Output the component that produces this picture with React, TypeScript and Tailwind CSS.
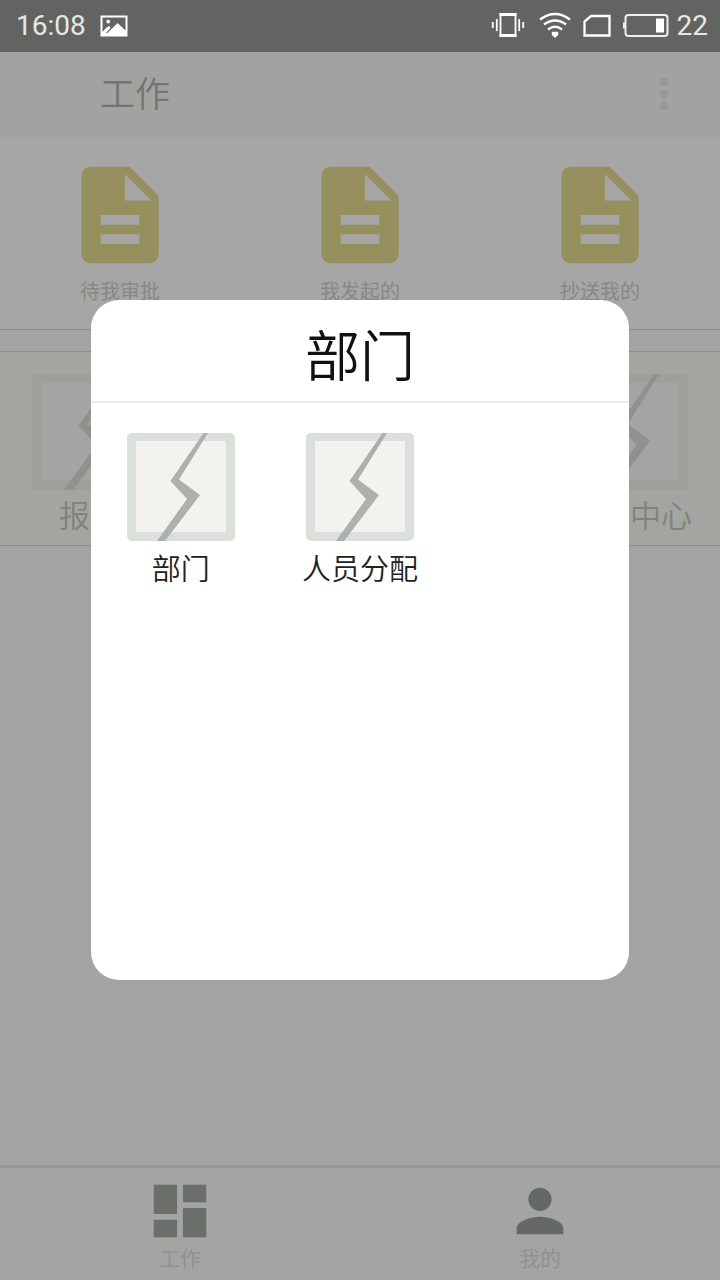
import React from "react";

const shortcuts = ["待我审批", "我发起的", "抄送我的"];
const modules = ["报表", "部门", "审批", "个人中心"];
const departmentItems = ["部门", "人员分配"];

function VibrateIcon() {
  return (
    <svg viewBox="0 0 34 28" className="h-7 w-[34px]" fill="none" stroke="#fff" aria-hidden="true">
      <rect x="9.500" y="2" width="15" height="22" strokeWidth="1.800" />
      <path d="M8.500 2.500h17M8.500 23.500h17" strokeWidth="3" />
      <path d="M5.800 7v12M28.200 7v12M1.800 10v6M32.200 10v6" strokeWidth="1.800" />
    </svg>
  );
}

function WifiIcon() {
  return (
    <svg viewBox="0 0 32 28" className="h-7 w-8" fill="none" stroke="#fff" strokeWidth="2.300" aria-hidden="true">
      <path d="M1 7.500Q16 -3.500 31 7.500M5 12.500Q16 4.500 27 12.500M9 17.500Q16 12 23 17.500" />
      <path d="M13.500 20.500h5v2L16 25l-2.500-2.500z" fill="#fff" strokeWidth="1.500" strokeLinejoin="round" />
    </svg>
  );
}

function SimIcon() {
  return (
    <svg viewBox="0 0 28 28" className="size-7" fill="none" stroke="#fff" strokeWidth="2.300" aria-hidden="true">
      <path d="M8 4H26.500v19.500H1.500V9.500z" />
    </svg>
  );
}

function BatteryIcon() {
  return (
    <svg viewBox="0 0 46 28" className="h-7 w-[46px]" fill="none" stroke="#eee" aria-hidden="true">
      <rect x="2.500" y="3" width="42" height="21" rx="3" strokeWidth="2" />
      <path d="M1 10.500v6" strokeWidth="2" />
      <rect x="33" y="6.500" width="8" height="14" fill="#fff" stroke="none" />
    </svg>
  );
}

function PictureIcon() {
  return (
    <svg viewBox="0 0 28 22" className="h-[22px] w-7" aria-hidden="true">
      <path
        fill="#fff"
        fillRule="evenodd"
        d="M0.500 0.500h27v21H0.500zM2.500 2.500V17l4-4.500 3-1.500 1 2-4.500 5h1.500L17.500 8l8 7.500V2.500zM8.200 4.700a1.900 1.900 0 1 1 0 3.800 1.900 1.900 0 0 1 0-3.800z"
      />
    </svg>
  );
}

function DocumentIcon() {
  return (
    <svg viewBox="0 0 24 24" className="size-[116px]" aria-hidden="true">
      <path
        fill="#96905f"
        d="M14 2H6c-1.100 0-1.990.9-1.990 2L4 20c0 1.100.890 2 1.990 2H18c1.100 0 2-.9 2-2V8l-6-6zm2 16H8v-2h8v2zm0-4H8v-2h8v2zm-3-5V3.500L18.500 9H13z"
      />
    </svg>
  );
}

function BoltTile({ className, frame, fill, bolt }: { className: string; frame: string; fill: string; bolt: string }) {
  return (
    <svg viewBox="0 0 108 108" className={className} aria-hidden="true">
      <rect width="108" height="108" rx="5" fill={frame} />
      <rect x="9" y="8" width="90" height="91" fill={fill} />
      <path d="M76.500 0H81L52 46.500 73 62 38 108H30L60 66 43.500 48z" fill={bolt} />
    </svg>
  );
}

function StatusBar() {
  return (
    <div className="flex h-[52px] items-center bg-[#636462] pl-4 pr-3 font-[Roboto,sans-serif] text-[28px] leading-8 text-[#e6e8e5]">
      <span>16:08</span>
      <span className="ml-[14px]">
        <PictureIcon />
      </span>
      <div className="ml-auto flex items-center gap-3">
        <div className="flex items-center gap-[14px]">
          <VibrateIcon />
          <WifiIcon />
        </div>
        <SimIcon />
        <div className="flex items-center gap-2">
          <BatteryIcon />
          <span>22</span>
        </div>
      </div>
    </div>
  );
}

function Dialog() {
  return (
    <div className="fixed inset-0 flex items-center justify-center">
      <section
        role="dialog"
        aria-labelledby="dialog-title"
        className="h-[680px] w-3/4 max-w-[538px] rounded-[28px] bg-white"
      >
        <h2
          id="dialog-title"
          className="border-b-2 border-[#ececec] pb-[11px] pt-[14px] text-center text-[55px] font-[350] leading-[76px] text-[#111]"
        >
          部门
        </h2>
        <div className="grid grid-cols-3 pt-[30px]">
          {departmentItems.map((name) => (
            <button key={name} type="button" className="flex flex-col items-center text-[29px] leading-[36px] text-[#222]">
              <BoltTile className="size-[108px]" frame="#dce0db" fill="#f3f2ef" bolt="#adb1ab" />
              <span className="mt-2 font-[350]">{name}</span>
            </button>
          ))}
        </div>
      </section>
    </div>
  );
}

export default function App() {
  return (
    <div className="flex min-h-screen flex-col bg-[#a3a4a2] font-['Noto_Sans_CJK_SC',sans-serif]">
      <StatusBar />

      <header className="flex h-[87px] items-center justify-between bg-[#a2a2a1] pb-1 pl-[100px] pr-[52px]">
        <h1 className="pb-1 text-[35px] font-[350] leading-[48px] text-[#747470]">工作</h1>
        <button type="button" aria-label="更多" className="flex flex-col gap-1">
          <span className="size-2 rounded-sm bg-[#969694]" />
          <span className="size-2 rounded-sm bg-[#969694]" />
          <span className="size-2 rounded-sm bg-[#969694]" />
        </button>
      </header>

      <main className="flex-1">
        <div className="grid h-[191px] grid-cols-3 border-b border-[#8b8d8a] bg-[#a5a6a5] pt-[18px]">
          {shortcuts.map((name) => (
            <button key={name} type="button" className="flex flex-col items-center text-[20px] leading-6 text-[#868984]">
              <DocumentIcon />
              <span className="mt-[6px]">{name}</span>
            </button>
          ))}
        </div>
        <div className="mt-[21px] grid h-[195px] grid-cols-4 border-y border-[#8b8d8a] bg-[#a3a5a0] pt-[22px]">
          {modules.map((name) => (
            <button key={name} type="button" className="flex flex-col items-center text-[31px] leading-9 text-[#7f827d]">
              <BoltTile className="size-[116px]" frame="#9d9f9a" fill="#a4a5a3" bolt="#8e928c" />
              <span className="mt-[6px] font-[350]">{name}</span>
            </button>
          ))}
        </div>
      </main>

      <nav className="grid grid-cols-2 border-t-[3px] border-[#969794] bg-[#a4a5a3] pb-3 pt-2 text-[21px] leading-[22px] text-[#90928e]">
        <a href="#work" className="flex flex-col items-center">
          <svg viewBox="0 0 24 24" className="size-[70px]" fill="#6a7069" aria-hidden="true">
            <path d="M3 13h8V3H3v10zm0 8h8v-6H3v6zm10 0h8V11h-8v10zm0-18v6h8V3h-8z" />
          </svg>
          <span>工作</span>
        </a>
        <a href="#me" className="flex flex-col items-center">
          <svg viewBox="0 0 24 24" className="size-[70px]" fill="#656963" aria-hidden="true">
            <path d="M12 12c2.210 0 4-1.790 4-4s-1.790-4-4-4-4 1.790-4 4 1.790 4 4 4zm0 2c-2.670 0-8 1.340-8 4v2h16v-2c0-2.660-5.330-4-8-4z" />
          </svg>
          <span>我的</span>
        </a>
      </nav>

      <Dialog />
    </div>
  );
}
